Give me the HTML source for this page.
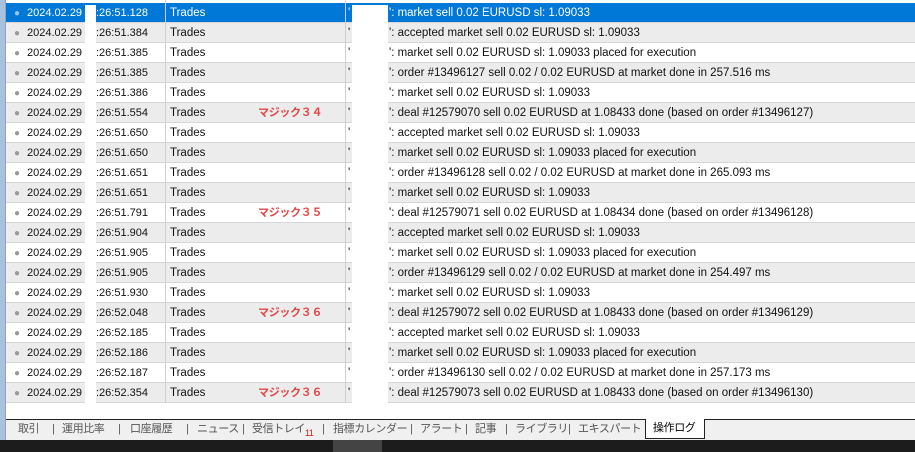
<!DOCTYPE html>
<html><head><meta charset="utf-8"><style>
*{margin:0;padding:0;box-sizing:border-box}
body{width:915px;height:452px;overflow:hidden;background:#fff;font-family:"Liberation Sans","Noto Sans CJK JP",sans-serif;font-size:11.5px;color:#111;position:relative}
.strip{position:absolute;left:0;top:0;width:6px;height:440px;background:#a9c1dd;border-right:1px solid #8aa5c8}
.row{position:absolute;left:6px;width:909px;height:20px;border-bottom:1px solid #d6d6d6;line-height:19px;white-space:nowrap}
.row span{position:absolute;top:1px}
.g{background:#ececec}
.sel{background:#0078d7;color:#fff}
.dot{left:8px;color:#999;font-size:10px}
.sel .dot{color:#9cc4ee}
.d{left:21px;font-size:11px}.t{left:90px;font-size:11px}.tr{left:164px}.q{left:342px}.m{left:383px}
.mg{left:252px;color:#e04848;font-size:11px;font-weight:bold;letter-spacing:-0.3px}
.vl{position:absolute;top:0;height:403px;width:1px;background:#d0d0d0}
.wb{position:absolute;background:#fff}
.tabs{position:absolute;left:6px;top:419px;width:909px;height:21px;background:#f0f0f0;border-top:1px solid #222;color:#555;line-height:19px;font-size:11px;letter-spacing:-0.4px}
.tabs span{position:absolute;top:0;white-space:nowrap}
.act{position:absolute;left:639px;top:-1px;width:60px;height:20px;background:#fff;border:1px solid #222;border-top:none;color:#000;padding-left:7px}
.dark{position:absolute;left:0;top:440px;width:915px;height:12px;background:#1c1c1c}
</style></head><body>
<div class="strip"></div>
<div class="row sel" style="top:3px"><span class="dot">●</span><span class="d">2024.02.29</span><span class="t">:26:51.128</span><span class="tr">Trades</span><span class="q">'</span><span class="m">': market sell 0.02 EURUSD sl: 1.09033</span></div>
<div class="row g" style="top:23px"><span class="dot">●</span><span class="d">2024.02.29</span><span class="t">:26:51.384</span><span class="tr">Trades</span><span class="q">'</span><span class="m">': accepted market sell 0.02 EURUSD sl: 1.09033</span></div>
<div class="row" style="top:43px"><span class="dot">●</span><span class="d">2024.02.29</span><span class="t">:26:51.385</span><span class="tr">Trades</span><span class="q">'</span><span class="m">': market sell 0.02 EURUSD sl: 1.09033 placed for execution</span></div>
<div class="row g" style="top:63px"><span class="dot">●</span><span class="d">2024.02.29</span><span class="t">:26:51.385</span><span class="tr">Trades</span><span class="q">'</span><span class="m">': order #13496127 sell 0.02 / 0.02 EURUSD at market done in 257.516 ms</span></div>
<div class="row" style="top:83px"><span class="dot">●</span><span class="d">2024.02.29</span><span class="t">:26:51.386</span><span class="tr">Trades</span><span class="q">'</span><span class="m">': market sell 0.02 EURUSD sl: 1.09033</span></div>
<div class="row g" style="top:103px"><span class="dot">●</span><span class="d">2024.02.29</span><span class="t">:26:51.554</span><span class="tr">Trades</span><span class="mg">マジック３４</span><span class="q">'</span><span class="m">': deal #12579070 sell 0.02 EURUSD at 1.08433 done (based on order #13496127)</span></div>
<div class="row" style="top:123px"><span class="dot">●</span><span class="d">2024.02.29</span><span class="t">:26:51.650</span><span class="tr">Trades</span><span class="q">'</span><span class="m">': accepted market sell 0.02 EURUSD sl: 1.09033</span></div>
<div class="row g" style="top:143px"><span class="dot">●</span><span class="d">2024.02.29</span><span class="t">:26:51.650</span><span class="tr">Trades</span><span class="q">'</span><span class="m">': market sell 0.02 EURUSD sl: 1.09033 placed for execution</span></div>
<div class="row" style="top:163px"><span class="dot">●</span><span class="d">2024.02.29</span><span class="t">:26:51.651</span><span class="tr">Trades</span><span class="q">'</span><span class="m">': order #13496128 sell 0.02 / 0.02 EURUSD at market done in 265.093 ms</span></div>
<div class="row g" style="top:183px"><span class="dot">●</span><span class="d">2024.02.29</span><span class="t">:26:51.651</span><span class="tr">Trades</span><span class="q">'</span><span class="m">': market sell 0.02 EURUSD sl: 1.09033</span></div>
<div class="row" style="top:203px"><span class="dot">●</span><span class="d">2024.02.29</span><span class="t">:26:51.791</span><span class="tr">Trades</span><span class="mg">マジック３５</span><span class="q">'</span><span class="m">': deal #12579071 sell 0.02 EURUSD at 1.08434 done (based on order #13496128)</span></div>
<div class="row g" style="top:223px"><span class="dot">●</span><span class="d">2024.02.29</span><span class="t">:26:51.904</span><span class="tr">Trades</span><span class="q">'</span><span class="m">': accepted market sell 0.02 EURUSD sl: 1.09033</span></div>
<div class="row" style="top:243px"><span class="dot">●</span><span class="d">2024.02.29</span><span class="t">:26:51.905</span><span class="tr">Trades</span><span class="q">'</span><span class="m">': market sell 0.02 EURUSD sl: 1.09033 placed for execution</span></div>
<div class="row g" style="top:263px"><span class="dot">●</span><span class="d">2024.02.29</span><span class="t">:26:51.905</span><span class="tr">Trades</span><span class="q">'</span><span class="m">': order #13496129 sell 0.02 / 0.02 EURUSD at market done in 254.497 ms</span></div>
<div class="row" style="top:283px"><span class="dot">●</span><span class="d">2024.02.29</span><span class="t">:26:51.930</span><span class="tr">Trades</span><span class="q">'</span><span class="m">': market sell 0.02 EURUSD sl: 1.09033</span></div>
<div class="row g" style="top:303px"><span class="dot">●</span><span class="d">2024.02.29</span><span class="t">:26:52.048</span><span class="tr">Trades</span><span class="mg">マジック３６</span><span class="q">'</span><span class="m">': deal #12579072 sell 0.02 EURUSD at 1.08433 done (based on order #13496129)</span></div>
<div class="row" style="top:323px"><span class="dot">●</span><span class="d">2024.02.29</span><span class="t">:26:52.185</span><span class="tr">Trades</span><span class="q">'</span><span class="m">': accepted market sell 0.02 EURUSD sl: 1.09033</span></div>
<div class="row g" style="top:343px"><span class="dot">●</span><span class="d">2024.02.29</span><span class="t">:26:52.186</span><span class="tr">Trades</span><span class="q">'</span><span class="m">': market sell 0.02 EURUSD sl: 1.09033 placed for execution</span></div>
<div class="row" style="top:363px"><span class="dot">●</span><span class="d">2024.02.29</span><span class="t">:26:52.187</span><span class="tr">Trades</span><span class="q">'</span><span class="m">': order #13496130 sell 0.02 / 0.02 EURUSD at market done in 257.173 ms</span></div>
<div class="row g" style="top:383px"><span class="dot">●</span><span class="d">2024.02.29</span><span class="t">:26:52.354</span><span class="tr">Trades</span><span class="mg">マジック３６</span><span class="q">'</span><span class="m">': deal #12579073 sell 0.02 EURUSD at 1.08433 done (based on order #13496130)</span></div>
<div class="vl" style="left:165px"></div>
<div class="vl" style="left:345px"></div>
<div class="wb" style="left:85px;top:5px;width:11px;height:398px"></div>
<div class="wb" style="left:352px;top:5px;width:36px;height:398px"></div>
<div class="tabs">
<span style="left:12px">取引</span><span style="left:46px">|</span>
<span style="left:56px">運用比率</span><span style="left:112px">|</span>
<span style="left:124px">口座履歴</span><span style="left:180px">|</span>
<span style="left:191px">ニュース</span><span style="left:236px">|</span>
<span style="left:246px">受信トレイ<sup style="color:#d02020;font-size:9px;vertical-align:-4px">11</sup></span><span style="left:316px">|</span>
<span style="left:327px">指標カレンダー</span><span style="left:404px">|</span>
<span style="left:414px">アラート</span><span style="left:459px">|</span>
<span style="left:469px">記事</span><span style="left:499px">|</span>
<span style="left:509px">ライブラリ</span><span style="left:562px">|</span>
<span style="left:572px">エキスパート</span>
<div class="act">操作ログ</div>
</div>
<div class="dark"><div style="position:absolute;left:333px;top:0;width:49px;height:12px;background:#444"></div></div>
</body></html>
